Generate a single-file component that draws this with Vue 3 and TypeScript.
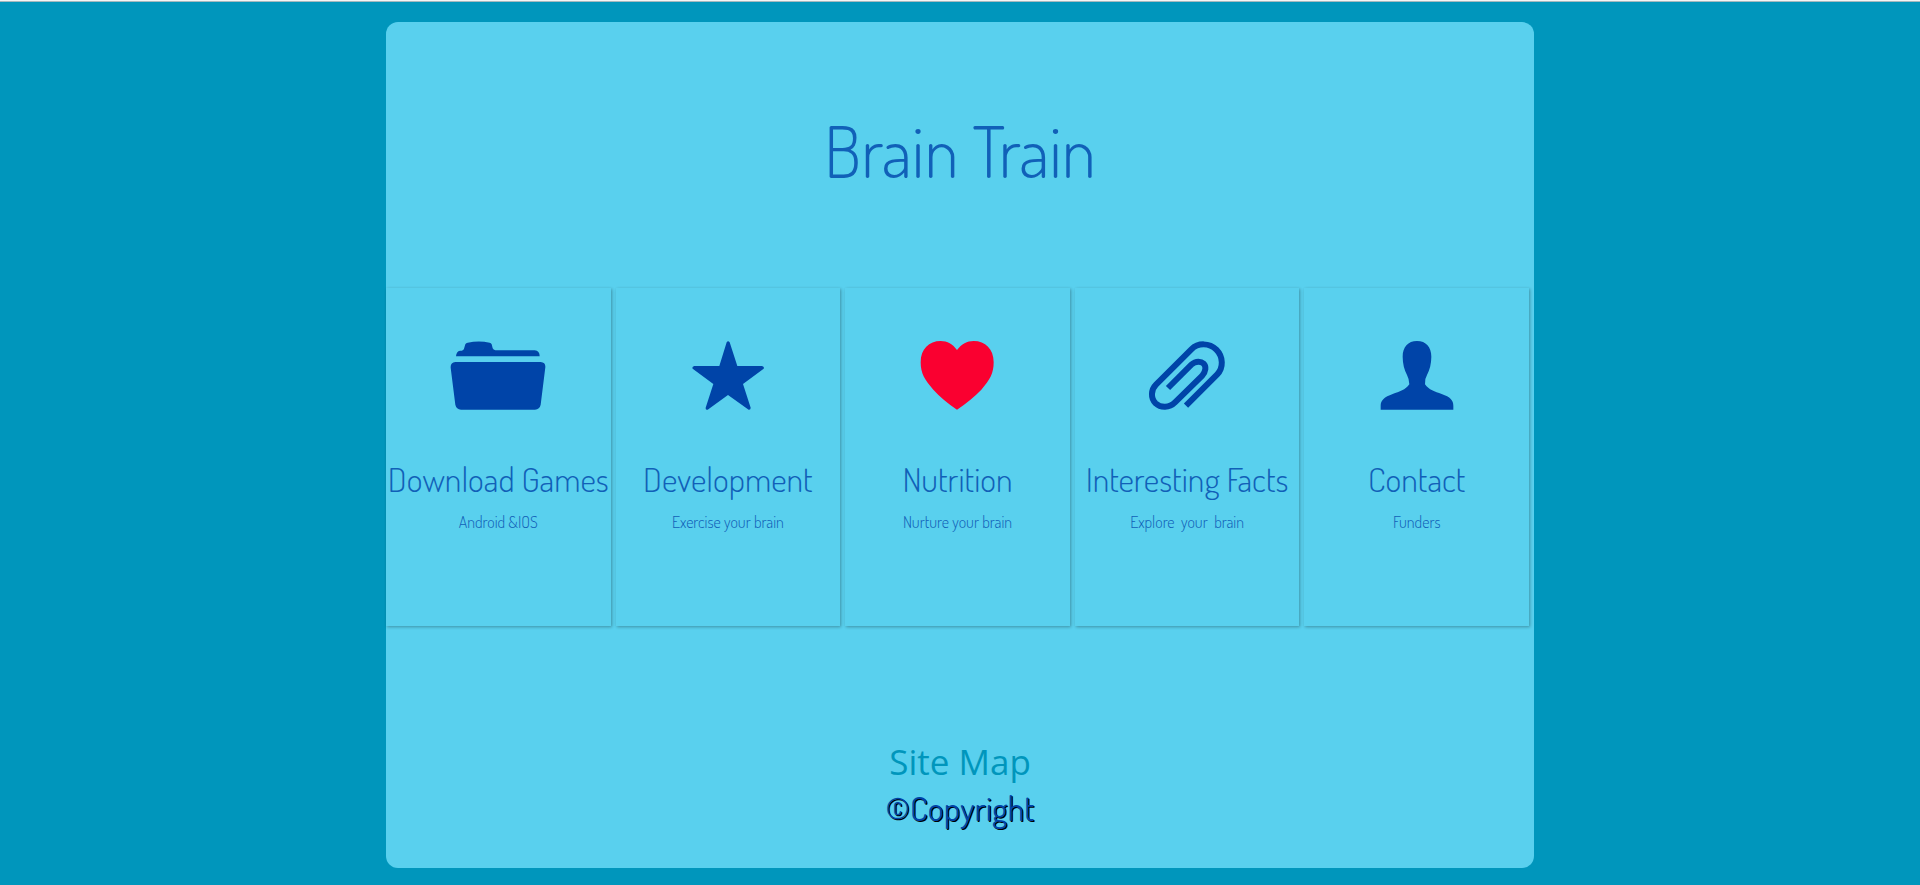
<script setup lang="ts">
interface MenuItem {
  title: string
  note: string
  viewBox: string
  path: string
  kind: 'fill' | 'line'
  love?: boolean
}

const items: MenuItem[] = [
  {
    title: 'Download Games',
    note: 'Android &IOS',
    viewBox: '226 183 288 207',
    kind: 'fill',
    path: 'M244 229Q245 214 256 212H261Q267 211 268 206L272 193Q274 189 279 188Q313 181 345 188Q349 189 351 193L354 205Q356 210 362 211H480Q495 212 495 229ZM242 246H498Q513 247 512 262L498 374Q495 388 481 389H259Q245 388 242 374L228 263Q227 247 242 246Z',
  },
  {
    title: 'Development',
    note: 'Exercise your brain',
    viewBox: '211 183 288 207',
    kind: 'fill',
    path: 'M351 187Q355 181 360 187L383 258H457Q465 260 462 266L400 312L423 383Q423 390 417 389L355 345L294 389Q287 390 288 383L311 312L249 266Q246 260 254 258H329Z',
  },
  {
    title: 'Nutrition',
    note: 'Nurture your brain',
    viewBox: '210 183 288 207',
    kind: 'fill',
    love: true,
    path: 'M354 210C341 192 325 183 305 183C270 183 245 207 245 247C245 280 257 300 283 329Q311 360 354 389Q397 360 427 329C453 300 464 280 464 247C464 207 439 183 404 183C384 183 368 192 354 210Z',
  },
  {
    title: 'Interesting Facts',
    note: 'Explore \u00a0your \u00a0brain',
    viewBox: '209 183 288 207',
    kind: 'line',
    path: 'M296 324L366 254C380 241 396 244 403 251C411 259 410 275 398 288L317 367C300 384 274 384 259 370C243 354 245 329 260 314L366 208C386 188 420 188 441 209C462 230 463 264 443 284L350 377',
  },
  {
    title: 'Contact',
    note: 'Funders',
    viewBox: '238 183 288 207',
    kind: 'fill',
    path: 'M382 183C409 183 425 201 425 230C425 251 420 270 412 285Q404 298 406 313C418 330 435 335 456 342C482 351 491 361 491 377V389H273V377C273 361 284 351 309 342C330 335 347 330 359 313Q359 298 352 285C344 270 339 251 339 230C339 201 355 183 382 183Z',
  },
]
</script>

<template>
  <div class="page">
    <main class="panel">
      <h1 class="heading">Brain Train</h1>
      <nav class="menu" aria-label="Main">
        <a v-for="item in items" :key="item.title" class="card" href="#">
          <svg class="icon" :class="[item.kind, { love: item.love }]" :viewBox="item.viewBox" aria-hidden="true">
            <path :d="item.path" />
          </svg>
          <h2 class="title">{{ item.title }}</h2>
          <p class="note">{{ item.note }}</p>
        </a>
      </nav>
      <footer class="footer">
        <a class="sitemap" href="#">Site Map</a>
        <span class="copyright">©Copyright</span>
      </footer>
    </main>
  </div>
</template>

<style>
body {
  margin: 0;
  background: #0096bc;
}
</style>

<style scoped>
.page {
  box-sizing: border-box;
  min-height: 100vh;
  padding: 21px 0 17px;
  border-top: 1px solid #f4f4f4;
  box-shadow: inset 0 1px #a5b9bf;
  background: #0096bc;
  font-family: Dosis, "Roboto Condensed", "Open Sans Condensed", "Liberation Sans Narrow", Roboto, sans-serif;
  font-weight: 300;
  color: #1160b8;
}
.panel {
  box-sizing: border-box;
  width: 60%;
  max-width: 1148px;
  margin: 0 auto;
  padding: 91px 0 38px;
  border-radius: 12px;
  background: #59d0ee;
}
.heading {
  margin: 0;
  font-size: 70px;
  line-height: 76px;
  font-weight: 300;
  text-align: center;
}
.menu {
  display: grid;
  grid-template-columns: repeat(5, 1fr);
  margin-top: 99px;
}
.card {
  display: flex;
  flex-direction: column;
  align-items: center;
  margin-right: 5px;
  padding: 53px 0 92px;
  box-shadow: 1px 1px 3px rgba(0, 0, 0, 0.3);
  color: inherit;
  text-decoration: none;
}
.icon {
  width: 96px;
  height: 69px;
}
.fill {
  fill: #0044a8;
}
.line {
  fill: none;
  stroke: #0044a8;
  stroke-width: 18px;
}
.love {
  fill: #fa0030;
}
.title {
  margin: 49px 0 0;
  font-size: 34px;
  line-height: 40px;
  font-weight: 300;
  white-space: nowrap;
}
.note {
  margin: 11px 0 0;
  font-size: 16px;
  line-height: 24px;
}
.footer {
  display: flex;
  flex-direction: column;
  align-items: center;
  margin-top: 112px;
}
.sitemap {
  font-family: "Open Sans", "Noto Sans", sans-serif;
  font-size: 35px;
  line-height: 48px;
  font-weight: 400;
  color: #0096bc;
  text-decoration: none;
}
.copyright {
  font-size: 34px;
  line-height: 44px;
  font-weight: 400;
  color: #0044a8;
  text-shadow: 1px 1px 0 #000000;
}
</style>
